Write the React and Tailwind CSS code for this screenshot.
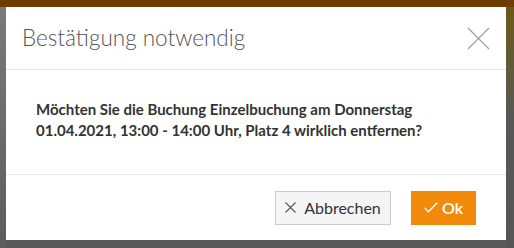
export default function App() {
  return (
    <div className="flex h-[248px] w-[514px] flex-col overflow-hidden bg-[#595959] font-['Lato',sans-serif]">
      <div className="h-[7px] shrink-0 bg-[#6e3d02]" />
      <div className="flex flex-1">
        <div className="w-[6px] bg-gradient-to-b from-[#7a7a7a] to-[#5c5c5c]" />
        <div className="flex h-[233px] w-[500px] flex-col bg-white">
          <header className="flex h-[63px] items-center justify-between border-b border-[#e6e6e6] pl-4 pr-4">
            <h1 className="text-[22.5px] font-light leading-none text-[#555]">Bestätigung notwendig</h1>
            <svg width="23" height="23" viewBox="0 0 23 23" className="text-[#a0a0a0]">
              <path d="M1 1L22 22M22 1L1 22" stroke="currentColor" strokeWidth="1.2" fill="none" />
            </svg>
          </header>
          <main className="h-[105px] border-b border-[#e6e6e6] px-[30px] pt-[29px]">
            <p className="text-[15px] font-bold leading-[21px] text-[#333]">
              Möchten Sie die Buchung Einzelbuchung am Donnerstag
              <br />
              01.04.2021, 13:00 - 14:00 Uhr, Platz 4 wirklich entfernen?
            </p>
          </main>
          <footer className="flex flex-1 items-center justify-end gap-5 pr-[30px]">
            <button className="flex h-[34px] w-[116px] items-center justify-center gap-2 border border-[#cccccc] bg-[#f5f5f5] text-[16px] text-[#333]">
              <svg width="11" height="11" viewBox="0 0 11 11" className="text-[#555]">
                <path d="M0.5 0.5L10.5 10.5M10.5 0.5L0.5 10.5" stroke="currentColor" strokeWidth="1.1" fill="none" />
              </svg>
              <span>Abbrechen</span>
            </button>
            <button className="flex h-[34px] w-[65px] items-center justify-center gap-1 bg-[#f28a0c] text-[16px] font-semibold text-white">
              <svg width="14" height="11" viewBox="0 0 14 11">
                <path d="M0.8 6L4.5 9.8L13.2 0.8" stroke="currentColor" strokeWidth="1.3" fill="none" />
              </svg>
              <span>Ok</span>
            </button>
          </footer>
        </div>
        <div className="flex-1 bg-gradient-to-b from-[#6b5a12] via-[#575757] to-[#555]" />
      </div>
    </div>
  );
}
